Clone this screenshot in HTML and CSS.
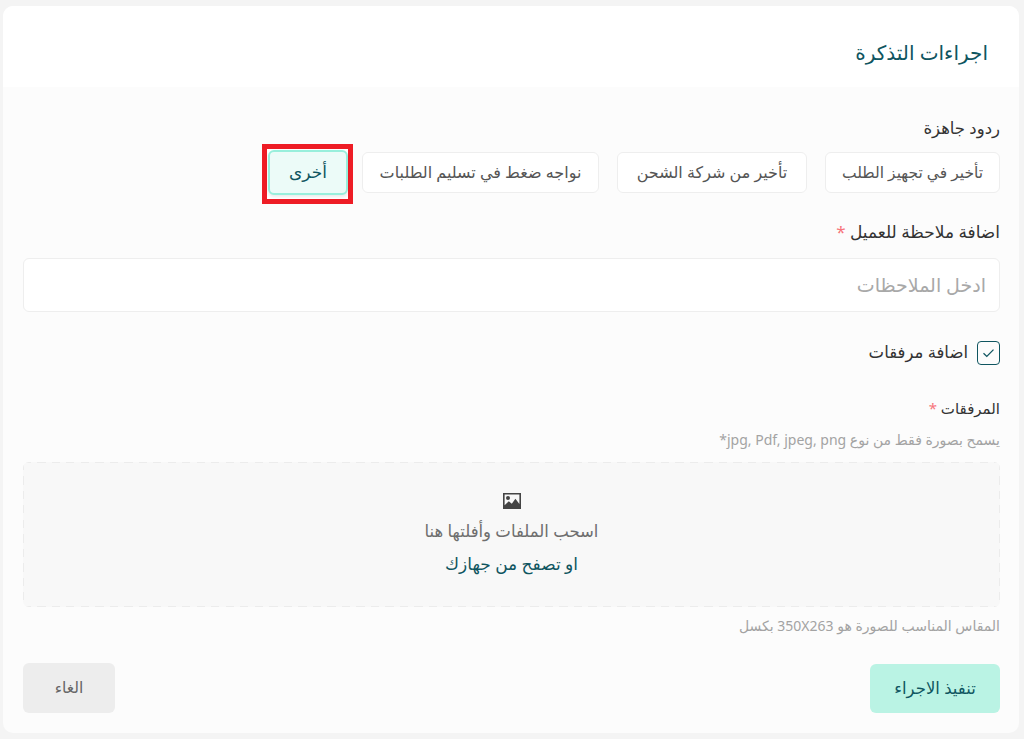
FILE: index.html
```html
<!DOCTYPE html>
<html lang="ar" dir="rtl">
<head>
<meta charset="utf-8">
<title>اجراءات التذكرة</title>
<link rel="stylesheet" href="styles.css">
</head>
<body>
<div class="card">
  <header class="card-head"><h1 class="title">اجراءات التذكرة</h1></header>
  <main class="card-body">
    <div class="label first">ردود جاهزة</div>
    <div class="chips">
      <button class="chip c1">تأخير في تجهيز الطلب</button>
      <button class="chip c2">تأخير من شركة الشحن</button>
      <button class="chip c3">نواجه ضغط في تسليم الطلبات</button>
      <div class="callout"><button class="chip selected">أخرى</button></div>
    </div>
    <div class="label note-label">اضافة ملاحظة للعميل <span class="req">*</span></div>
    <div class="input">ادخل الملاحظات</div>
    <label class="check-row">
      <span class="checkbox"><svg width="13" height="10" viewBox="0 0 13 10"><path d="M1.5 5.2 4.8 8.4 11.5 1.6" fill="none" stroke="#0f5560" stroke-width="1.3"/></svg></span>
      <span class="check-text">اضافة مرفقات</span>
    </label>
    <div class="label att-label">المرفقات <span class="req">*</span></div>
    <div class="hint top-hint">يسمح بصورة فقط من نوع jpg, Pdf, jpeg, png*</div>
    <div class="drop">
      <svg class="pic" width="18" height="16" viewBox="0 0 18 16"><path fill-rule="evenodd" fill="#444" d="M0 0h18v16H0zM1.6 1.6v10.6l4.2-4 3 2.6 3.6-5 4 5.2V1.6zM5 3a2 2 0 1 1 0 4 2 2 0 0 1 0-4z"/></svg>
      <div class="drop-text">اسحب الملفات وأفلتها هنا</div>
      <div class="drop-link">او تصفح من جهازك</div>
    </div>
    <div class="hint bottom-hint">المقاس المناسب للصورة هو 350X263 بكسل</div>
    <div class="actions">
      <button class="btn primary">تنفيذ الاجراء</button>
      <button class="btn cancel">الغاء</button>
    </div>
  </main>
</div>
</body>
</html>
```
FILE: styles.css
```css
* { box-sizing: border-box; }
html, body { margin: 0; height: 100%; }
body {
  background: #f4f4f4;
  padding: 6px 5px 6px 3px;
  font-family: "Noto Sans", "DejaVu Sans", sans-serif;
  color: #3c3c3c;
  overflow: hidden;
}
.card {
  height: 727px;
  background: #fcfcfc;
  border-radius: 10px;
  overflow: hidden;
}
.card-head {
  height: 81px;
  background: #fff;
  padding: 0 31px;
  display: flex;
  align-items: center;
}
.title { margin: 13px 0 0; font-size: 20px; font-weight: 400; color: #0f5560; line-height: 30px; }
.card-body { padding: 0 19px 0 20px; }
.label { font-size: 16.5px; line-height: 20px; color: #333; }
.first { margin-top: 31px; }
.chips { display: flex; margin-top: 14px; height: 41px; gap: 18px; }
.chip {
  font: inherit;
  font-size: 16px;
  height: 41px;
  padding: 0 0 2px;
  background: #fff;
  border: 1px solid #eeeeee;
  border-radius: 6px;
  color: #555;
}
.c1 { width: 175px; font-size: 15.5px; }
.c2 { width: 190px; }
.c3 { width: 237px; }
.callout {
  flex: none;
  width: 91px;
  height: 60px;
  margin: -8px -9px 0 0;
  border: 5px solid #ee1c25;
  background: #fff;
  padding: 1px 0 5px 1px;
}
.selected {
  display: block;
  width: 80px;
  height: 45px;
  font-size: 17px;
  background: #ecfbf8;
  border: 2px solid #98efdc;
  color: #0f5560;
  box-shadow: 0 2px 3px rgba(0,0,0,.08);
}
.note-label { margin-top: 29px; font-size: 17px; }
.req { color: #f7757b; }
.input {
  margin-top: 16px;
  height: 54px;
  background: #fff;
  border: 1px solid #eeeeee;
  border-radius: 6px;
  padding: 0 13px;
  display: flex;
  align-items: center;
  font-size: 19px;
  color: #a8a8a8;
}
.check-row { display: flex; align-items: center; gap: 9px; margin-top: 29px; height: 24px; }
.checkbox {
  width: 23px; height: 24px;
  border: 1px solid #0f5560;
  border-radius: 4px;
  display: flex; align-items: center; justify-content: center;
}
.check-text { font-size: 16.5px; color: #333; margin-bottom: 4px; }
.att-label { margin-top: 33px; font-size: 15px; }
.hint { font-size: 14px; line-height: 18px; color: #a3a3a3; }
.top-hint { margin-top: 13px; }
.drop {
  margin-top: 13px;
  height: 145px;
  background-color: #f8f8f8;
  background-image:
    repeating-linear-gradient(90deg, #ececec 0 8px, transparent 8px 14.5px),
    repeating-linear-gradient(90deg, #ececec 0 8px, transparent 8px 14.5px),
    repeating-linear-gradient(180deg, #ececec 0 8px, transparent 8px 14.5px),
    repeating-linear-gradient(180deg, #ececec 0 8px, transparent 8px 14.5px);
  background-size: 100% 1px, 100% 1px, 1px 100%, 1px 100%;
  background-position: 0 0, 0 100%, 0 0, 100% 0;
  background-repeat: no-repeat;
  border-radius: 6px;
  display: flex;
  flex-direction: column;
  align-items: center;
  padding-top: 31px;
}
.pic { display: block; }
.drop-text { margin-top: 12px; font-size: 16.5px; line-height: 20px; color: #6e6e6e; }
.drop-link { margin-top: 13px; font-size: 17px; line-height: 20px; color: #0f5560; }
.bottom-hint { margin-top: 10px; }
.actions { display: flex; justify-content: space-between; align-items: flex-end; margin-top: 28px; height: 50px; }
.btn { font: inherit; font-size: 16.5px; border: 0; border-radius: 6px; padding: 0 0 2px; }
.primary { width: 130px; height: 49px; background: #baf3e4; color: #0f5560; }
.cancel { width: 92px; height: 50px; font-size: 15.5px; background: #ededed; color: #666; }
```
